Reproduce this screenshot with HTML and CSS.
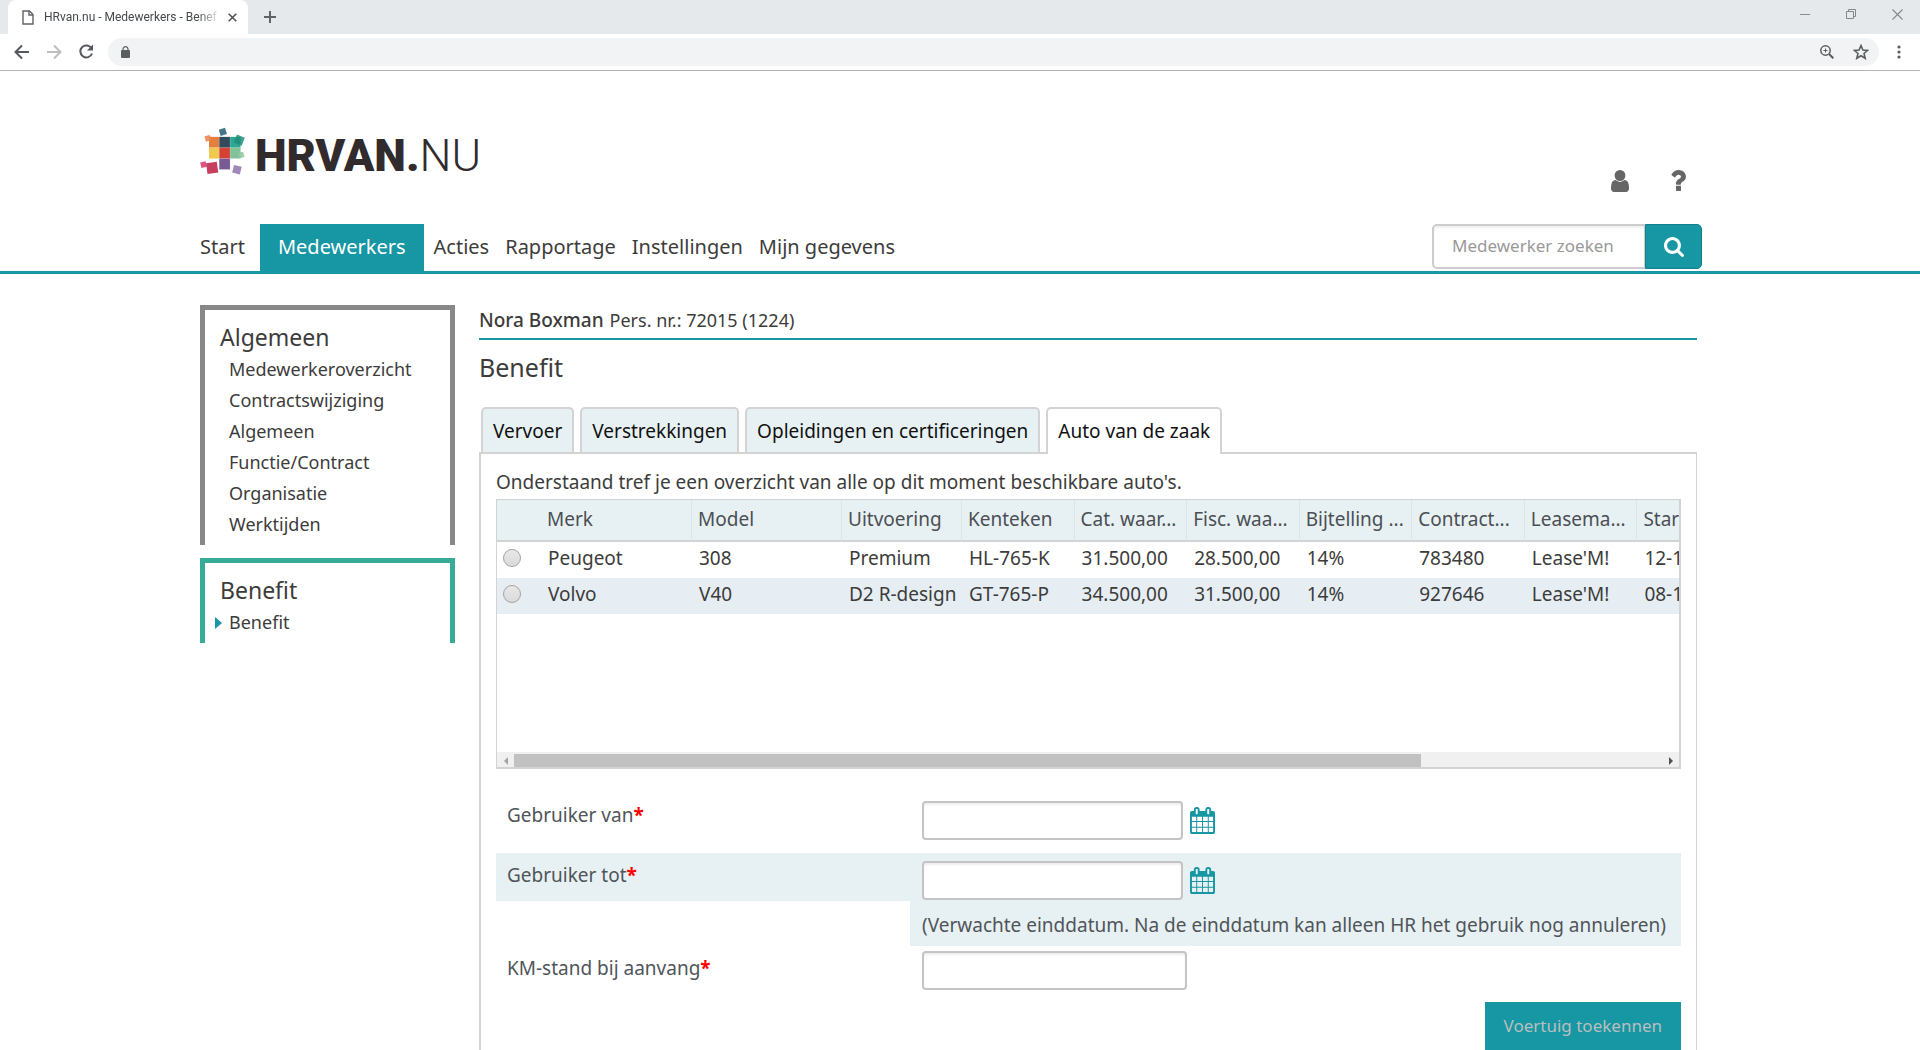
FILE: index.html
```html
<!DOCTYPE html>
<html lang="nl">
<head>
<meta charset="utf-8">
<meta name="viewport" content="width=device-width, initial-scale=1">
<title>HRvan.nu - Medewerkers - Benefit</title>
<link rel="stylesheet" href="styles.css">
</head>
<body>
<svg class="sprite" aria-hidden="true">
  <symbol id="calendar" viewBox="0 0 1664 1792"><path d="M128 1664h288v-288h-288v288zm352 0h320v-288h-320v288zm-352-352h288v-320h-288v320zm352 0h320v-320h-320v320zm-352-384h288v-288h-288v288zm736 736h320v-288h-320v288zm-384-736h320v-288h-320v288zm768 736h288v-288h-288v288zm-384-352h320v-320h-320v320zm-352-864v-288q0-13-9.5-22.5t-22.5-9.5h-64q-13 0-22.5 9.5t-9.5 22.5v288q0 13 9.5 22.5t22.5 9.5h64q13 0 22.5-9.5t9.5-22.5zm736 864h288v-320h-288v320zm-384-384h320v-288h-320v288zm384 0h288v-288h-288v288zm32-480v-288q0-13-9.5-22.5t-22.5-9.5h-64q-13 0-22.5 9.5t-9.5 22.5v288q0 13 9.5 22.5t22.5 9.5h64q13 0 22.5-9.5t9.5-22.5zm384-64v1280q0 52-38 90t-90 38h-1408q-52 0-90-38t-38-90v-1280q0-52 38-90t90-38h128v-96q0-66 47-113t113-47h64q66 0 113 47t47 113v96h384v-96q0-66 47-113t113-47h64q66 0 113 47t47 113v96h128q52 0 90 38t38 90z"/></symbol>
</svg>

<div class="browser">
  <div class="tabstrip">
    <div class="browser-tab">
      <svg class="file-icon" width="12" height="15" viewBox="0 0 12 15" fill="none" stroke="#5f6368" stroke-width="1.4"><path d="M1 1h6.500l3.500 3.500V14H1z"/><path d="M7 1v4h4"/></svg>
      <span class="tab-title">HRvan.nu - Medewerkers - Benef</span>
      <button class="plain" aria-label="Tabblad sluiten"><svg width="9" height="9" viewBox="0 0 9 9" stroke="#4f5357" stroke-width="1.600"><path d="M.7.7l7.600 7.600M8.300.7L.7 8.300"/></svg></button>
    </div>
    <button class="plain" aria-label="Nieuw tabblad"><svg width="12" height="12" viewBox="0 0 12 12" stroke="#5f6368" stroke-width="2"><path d="M6 0v12M0 6h12"/></svg></button>
    <div class="window-buttons">
      <button class="plain" aria-label="Minimaliseren"><svg width="10" height="10" viewBox="0 0 10 10" stroke="#8a8d90"><path d="M0 5.500h10"/></svg></button>
      <button class="plain" aria-label="Vorig formaat"><svg width="10" height="10" viewBox="0 0 10 10" fill="none" stroke="#85888b"><path d="M.5 2.500h7v7h-7zM2.500 2.500v-2h7v7h-2"/></svg></button>
      <button class="plain" aria-label="Sluiten"><svg width="11" height="11" viewBox="0 0 11 11" stroke="#85888b" stroke-width="1.100"><path d="M.5.5l10 10M10.500.5l-10 10"/></svg></button>
    </div>
  </div>
  <div class="toolbar">
    <button class="plain" aria-label="Terug"><svg width="16" height="16" viewBox="0 0 16 16" fill="none" stroke="#55595e" stroke-width="2"><path d="M15 8H2M8 1.500L1.500 8 8 14.500"/></svg></button>
    <button class="plain" aria-label="Vooruit"><svg width="16" height="16" viewBox="0 0 16 16" fill="none" stroke="#bdbec0" stroke-width="2"><path d="M1 8h13M8 1.500L14.500 8 8 14.500"/></svg></button>
    <button class="plain" aria-label="Vernieuwen"><svg width="16" height="16" viewBox="0 0 16 16" fill="none" stroke="#55595e" stroke-width="2"><path d="M13.600 4.500A6 6 0 1 0 14 9.500"/><path d="M15 .5v6H9z" fill="#55595e" stroke="none"/></svg></button>
    <div class="omnibox">
      <svg width="10" height="13" viewBox="0 0 10 13"><rect x="0" y="4" width="9" height="8" rx="1" fill="#5a5d62"/><path d="M2 5V3.200a2.500 2.500 0 0 1 5 0V5" fill="none" stroke="#5a5d62" stroke-width="1.200"/></svg>
      <span class="spacer"></span>
      <svg width="14" height="14" viewBox="0 0 14 14" fill="none" stroke="#5a5d62" stroke-width="1.500"><circle cx="5.500" cy="5.500" r="4.700"/><path d="M9 9l4.300 4.300" stroke-width="2"/><path d="M5.500 3.500v4M3.500 5.500h4" stroke-width="1"/></svg>
      <svg width="16" height="16" viewBox="0 0 16 16" fill="none" stroke="#5a5d62" stroke-width="1.600"><path d="M8 1.500l1.900 4.500 4.800.4-3.700 3.100 1.200 4.700L8 11.700l-4.200 2.500L5 9.500 1.300 6.400l4.800-.4z"/></svg>
    </div>
    <button class="plain menu" aria-label="Menu"><svg width="4" height="14" viewBox="0 0 4 14" fill="#5a5d62"><circle cx="2" cy="2" r="1.600"/><circle cx="2" cy="7" r="1.600"/><circle cx="2" cy="12" r="1.600"/></svg></button>
  </div>
</div>

<header class="site-header">
  <div class="brand-row">
    <a class="logo" href="#">
      <svg width="45" height="48" viewBox="30 36 136 146">
        <rect x="57" y="66" width="31" height="33" fill="#e57f3c"/>
        <rect x="88" y="66" width="33" height="33" fill="#33495c"/>
        <rect x="121" y="66" width="32" height="33" fill="#2fa594"/>
        <rect x="57" y="99" width="31" height="33" fill="#efca4f"/>
        <rect x="88" y="99" width="33" height="33" fill="#d54233"/>
        <rect x="121" y="99" width="32" height="33" fill="#83c199"/>
        <rect x="88" y="132" width="33" height="33" fill="#785a95"/>
        <path d="M121 66v99M88 66v99M57 99h96M88 132h65" stroke="#fff" stroke-opacity=".3" stroke-width="1.500"/>
        <rect x="89" y="41" width="20" height="20" fill="#47758a" transform="rotate(-17 99 51)"/>
        <rect x="45" y="62" width="17" height="17" fill="#ec8850" opacity=".9" transform="rotate(-14 53 70)"/>
        <rect x="136" y="63" width="26" height="26" fill="#1f8f79" opacity=".85" transform="rotate(22 149 76)"/>
        <rect x="146" y="113" width="17" height="17" fill="#92c9a5" opacity=".9" transform="rotate(-14 154 121)"/>
        <rect x="32" y="142" width="17" height="17" fill="#dc5580" transform="rotate(-14 40 151)"/>
        <rect x="50" y="144" width="33" height="33" fill="#c8405f" transform="rotate(-8 66 160)"/>
        <rect x="130" y="154" width="24" height="24" fill="#a087b7" transform="rotate(14 142 166)"/>
      </svg>
      <span class="logo-text"><b>HRVAN.</b>NU</span>
    </a>
    <div class="header-icons">
      <a href="#" aria-label="Profiel"><svg width="18" height="22" viewBox="256 128 1280 1536" preserveAspectRatio="none"><path d="M1536 1399q0 109-62.500 187t-150.500 78h-854q-88 0-150.500-78t-62.500-187q0-85 8.500-160.500t31.500-152 58.500-131 94-89 134.500-34.500q131 128 313 128t313-128q76 0 134.500 34.500t94 89 58.500 131 31.500 152 8.500 160.500zm-256-887q0 159-112.500 271.500t-271.500 112.500-271.500-112.500-112.500-271.500 112.500-271.500 271.500-112.500 271.500 112.500 112.500 271.500z"/></svg></a>
      <a href="#" aria-label="Help"><svg width="16" height="21" viewBox="384 256 1024 1280" preserveAspectRatio="none"><path d="M1088 1256v240q0 16-12 28t-28 12h-240q-16 0-28-12t-12-28v-240q0-16 12-28t28-12h240q16 0 28 12t12 28zm316-600q0 54-15.500 101t-35 76.500-55 59.500-57.500 43.500-61 35.500q-41 23-68.500 65t-27.500 67q0 17-12 32.500t-28 15.500h-240q-15 0-25.500-18.500t-10.500-37.500v-45q0-83 65-156.500t143-108.500q59-27 84-56t25-76q0-42-46.500-74t-107.500-32q-65 0-108 29-35 25-107 115-13 16-31 16-12 0-25-8l-164-125q-13-10-15.500-25t5.500-28q160-266 464-266 80 0 161 31t146 83 106 127.500 41 158.500z"/></svg></a>
    </div>
  </div>
  <div class="nav-row">
    <nav class="main-nav">
      <a href="#">Start</a>
      <a href="#" class="active">Medewerkers</a>
      <a href="#">Acties</a>
      <a href="#">Rapportage</a>
      <a href="#">Instellingen</a>
      <a href="#">Mijn gegevens</a>
    </nav>
    <form class="search">
      <input type="text" placeholder="Medewerker zoeken" aria-label="Medewerker zoeken">
      <button type="button" aria-label="Zoeken"><svg width="20" height="20" viewBox="64 128 1664 1664" fill="#fff"><path d="M1216 832q0-185-131.500-316.500t-316.500-131.500-316.500 131.500-131.500 316.500 131.500 316.500 316.500 131.500 316.500-131.500 131.500-316.500zm512 832q0 52-38 90t-90 38q-54 0-90-38l-343-342q-179 124-399 124-143 0-273.500-55.500t-225-150-150-225-55.500-273.500 55.500-273.500 150-225 225-150 273.500-55.500 273.500 55.500 225 150 150 225 55.500 273.500q0 220-124 399l343 343q37 37 37 90z"/></svg></button>
    </form>
  </div>
</header>

<div class="layout">
  <aside class="sidebar">
    <section class="side-box">
      <h2>Algemeen</h2>
      <ul>
        <li><a href="#">Medewerkeroverzicht</a></li>
        <li><a href="#">Contractswijziging</a></li>
        <li><a href="#">Algemeen</a></li>
        <li><a href="#">Functie/Contract</a></li>
        <li><a href="#">Organisatie</a></li>
        <li><a href="#">Werktijden</a></li>
      </ul>
    </section>
    <section class="side-box green">
      <h2>Benefit</h2>
      <ul>
        <li class="current"><a href="#">Benefit</a></li>
      </ul>
    </section>
  </aside>

  <main class="content">
    <p class="person"><strong>Nora Boxman</strong><span>Pers. nr.: 72015 (1224)</span></p>
    <h1>Benefit</h1>
    <div class="tabs" role="tablist">
      <button role="tab">Vervoer</button>
      <button role="tab">Verstrekkingen</button>
      <button role="tab">Opleidingen en certificeringen</button>
      <button role="tab" class="selected" aria-selected="true">Auto van de zaak</button>
    </div>
    <div class="panel">
      <p class="intro">Onderstaand tref je een overzicht van alle op dit moment beschikbare auto's.</p>
      <div class="grid-box">
        <div class="grid-view">
          <table>
            <colgroup><col class="pick"><col class="brand"><col class="model"><col class="trim"><col span="7"></colgroup>
            <thead>
              <tr><th class="open"></th><th>Merk</th><th>Model</th><th>Uitvoering</th><th>Kenteken</th><th>Cat. waar...</th><th>Fisc. waa...</th><th>Bijtelling ...</th><th>Contract...</th><th>Leasema...</th><th>Startdatum</th></tr>
            </thead>
            <tbody>
              <tr><td><input type="radio" name="auto" aria-label="Peugeot 308"></td><td>Peugeot</td><td>308</td><td>Premium</td><td>HL-765-K</td><td>31.500,00</td><td>28.500,00</td><td>14%</td><td>783480</td><td>Lease'M!</td><td>12-12-2018</td></tr>
              <tr><td><input type="radio" name="auto" aria-label="Volvo V40"></td><td>Volvo</td><td>V40</td><td>D2 R-design</td><td>GT-765-P</td><td>34.500,00</td><td>31.500,00</td><td>14%</td><td>927646</td><td>Lease'M!</td><td>08-11-2018</td></tr>
            </tbody>
          </table>
        </div>
        <div class="scrollbar">
          <svg class="arrow" width="17" height="10" viewBox="0 0 17 10" fill="#a3a3a3"><path d="M11 1v8L7 5z"/></svg>
          <div class="track"><div class="thumb"></div></div>
          <svg class="arrow" width="17" height="10" viewBox="0 0 17 10" fill="#505050"><path d="M7 1v8l4-4z"/></svg>
        </div>
      </div>

      <form class="fields">
        <div class="row">
          <label for="van">Gebruiker van<em>*</em></label>
          <div class="field"><div class="date"><input type="text" id="van"><button type="button" class="plain" aria-label="Kies datum"><svg class="cal" width="25" height="27"><use href="#calendar"/></svg></button></div></div>
        </div>
        <div class="row tinted">
          <label for="tot">Gebruiker tot<em>*</em></label>
          <div class="field"><div class="date"><input type="text" id="tot"><button type="button" class="plain" aria-label="Kies datum"><svg class="cal" width="25" height="27"><use href="#calendar"/></svg></button></div><p>(Verwachte einddatum. Na de einddatum kan alleen HR het gebruik nog annuleren)</p></div>
        </div>
        <div class="row compact">
          <label for="km">KM-stand bij aanvang<em>*</em></label>
          <div class="field"><input type="text" id="km" class="wide"></div>
        </div>
        <div class="actions"><button type="button" class="submit" disabled>Voertuig toekennen</button></div>
      </form>
    </div>
  </main>
</div>
</body>
</html>
```
FILE: styles.css
```css
* { box-sizing: border-box; }

:root {
  --teal: #1796a3;
  --pale: #e7f1f3;
  --line: #d3d3d3;
  --text: #3c3c3b;
}

body {
  margin: 0;
  min-height: 100vh;
  display: flex;
  flex-direction: column;
  background: #fff;
  color: var(--text);
  font: 19px/26px "Noto Sans", "Open Sans", sans-serif;
}

h1, h2, p, ul { margin: 0; padding: 0; font-weight: 400; }
ul { list-style: none; }
a { color: inherit; text-decoration: none; }
svg { display: block; flex: none; }
input, button { font: inherit; color: inherit; }
.sprite { display: none; }
.plain { display: flex; border: 0; padding: 0; background: none; }
.spacer { flex: 1; }

/* browser window */
.tabstrip {
  display: flex;
  align-items: center;
  height: 34px;
  padding: 0 17px 0 8px;
  background: #e5e9ec;
}
.browser-tab {
  display: flex;
  align-items: center;
  align-self: stretch;
  width: 240px;
  margin-right: 16px;
  padding: 0 11px 0 14px;
  border-radius: 8px 8px 0 0;
  background: #fff;
}
.file-icon { margin-right: 10px; }
.tab-title {
  flex: 1;
  margin-right: 9px;
  overflow: hidden;
  white-space: nowrap;
  font: 12px/16px Roboto, sans-serif;
  color: #45494d;
  -webkit-mask-image: linear-gradient(90deg, #000 155px, transparent 176px);
  mask-image: linear-gradient(90deg, #000 155px, transparent 176px);
}
.window-buttons {
  display: flex;
  align-items: center;
  gap: 36px;
  height: 28px;
  margin-left: auto;
  align-self: flex-start;
}
.toolbar {
  display: flex;
  align-items: center;
  gap: 16px;
  height: 37px;
  padding: 0 19px 0 14px;
  border-bottom: 1px solid #b4b4b4;
}
.omnibox {
  flex: 1;
  display: flex;
  align-items: center;
  gap: 19px;
  height: 28px;
  padding: 0 10px 0 13px;
  margin-left: -2px;
  border-radius: 14px;
  background: #f1f3f4;
}
.toolbar .menu { margin-left: 2px; }

/* site header */
.site-header {
  padding: 53px 218px 0 200px;
  border-bottom: 3px solid var(--teal);
}
.brand-row {
  display: flex;
  justify-content: space-between;
  height: 100px;
}
.logo { display: flex; align-items: flex-start; gap: 10px; padding-top: 3px; color: #322b2d; }
.logo-text { font: 300 45px/58px Roboto, sans-serif; }
.logo-text b { font-weight: 900; }
.header-icons {
  display: flex;
  gap: 41px;
  padding: 46px 16px 0 0;
  fill: #666;
}
.nav-row { display: flex; justify-content: space-between; }
.main-nav {
  display: flex;
  gap: 16px;
  font-size: 20px;
  line-height: 46px;
}
.main-nav a { height: 47px; }
.main-nav .active {
  margin: 0 -6px 0 -1px;
  padding: 0 18px;
  background: var(--teal);
  color: #fff;
}
.search { display: flex; height: 45px; }
.search input {
  width: 213px;
  padding: 0 18px 2px;
  border: 2px solid #ccc;
  border-right-width: 1px;
  border-radius: 5px 0 0 5px;
  box-shadow: inset 0 2px 2px #0001;
  font-size: 17px;
}
.search input::placeholder { color: #999; }
.search button {
  display: flex;
  align-items: center;
  justify-content: center;
  width: 57px;
  border: 1px solid #12808b;
  border-radius: 0 5px 5px 0;
  background: var(--teal);
}

/* page body */
.layout {
  flex: 1;
  display: grid;
  grid-template-columns: 255px 1fr;
  column-gap: 24px;
  padding: 31px 223px 0 200px;
}
.sidebar { display: flex; flex-direction: column; gap: 13px; }
.side-box {
  padding: 12px 15px 5px;
  border: 5px solid #888;
  border-bottom: 0;
}
.side-box.green { border-color: #36ab97; }
.side-box h2 { font-size: 23px; line-height: 30px; }
.side-box ul { padding: 2px 0 0 9px; font-size: 18px; line-height: 31px; }
.current { display: flex; align-items: center; }
.current::before {
  content: "";
  margin: 0 7px 0 -14px;
  border: 6px solid transparent;
  border-left: 7px solid var(--teal);
  border-right: 0;
}

.content { display: flex; flex-direction: column; min-width: 0; padding-top: 2px; }
.person {
  display: flex;
  gap: 6px;
  padding-bottom: 5px;
  border-bottom: 2px solid var(--teal);
}
.person strong { font-weight: 500; }
.person span { font-size: 18px; }
h1 { margin: 10px 0 23px; font-size: 25px; line-height: 34px; }

.tabs { display: flex; gap: 6px; padding-left: 2px; }
.tabs button {
  height: 45px;
  padding: 0 10px;
  border: 2px solid var(--line);
  border-bottom: 0;
  border-radius: 5px 5px 0 0;
  background: var(--pale);
  color: #111;
}
.tabs .selected {
  height: 47px;
  margin-bottom: -2px;
  padding-bottom: 2px;
  background: #fff;
  z-index: 1;
}
.panel {
  flex: 1;
  padding: 15px 15px 0;
  border: 1px solid var(--line);
  border-top-width: 2px;
  border-left-width: 2px;
  border-bottom: 0;
}
.intro { margin-bottom: 4px; }

/* car table */
.grid-box {
  border: 1px solid var(--line);
  border-width: 1px 2px 2px 1px;
}
.grid-view { height: 252px; overflow: hidden; }
table {
  width: 1253px;
  table-layout: fixed;
  border-collapse: separate;
  border-spacing: 0;
}
.pick { width: 44px; }
.brand { width: 151px; }
.model { width: 150px; }
.trim { width: 120px; }
th, td { padding: 0; text-align: left; font-weight: 400; white-space: nowrap; line-height: 32px; }
th {
  height: 42px;
  padding: 0 0 3px 6px;
  border-right: 1px solid #dbe4e7;
  border-bottom: 2px solid var(--line);
  background: var(--pale);
  color: #4b4f54;
}
th.open { border-right: 0; }
td { height: 36px; padding: 0 0 4px 7px; }
td:first-child { padding-left: 6px; }
tbody tr:nth-child(even) { background: #e6eef4; }
input[type="radio"] {
  display: block;
  appearance: none;
  width: 18px;
  height: 18px;
  margin: 0;
  border: 1px solid #a3a3a3;
  border-radius: 50%;
  background: linear-gradient(#e8e8e8, #dadada);
}
.scrollbar { display: flex; align-items: center; height: 15px; padding-top: 2px; background: #f0f0f0; }
.track { flex: 1; }
.thumb { width: 79%; height: 13px; background: #c1c1c1; }

/* form */
.fields { padding-top: 24px; color: #50555a; }
.row { display: grid; grid-template-columns: 414px 1fr; align-items: start; min-height: 60px; }
.row label { padding: 9px 11px 13px; }
.row em { color: #f00; font-style: normal; font-weight: 700; }
.field { padding: 8px 12px; }
.date { display: flex; align-items: center; gap: 7px; }
.cal { fill: var(--teal); }
.field input {
  display: block;
  width: 261px;
  height: 39px;
  border: 2px solid #c4c4c4;
  border-radius: 4px;
  background: #fff;
  box-shadow: inset 0 2px 2px #0001;
}
.field .wide { width: 265px; }
.field p { padding-top: 12px; white-space: nowrap; }
.tinted label, .tinted .field { background: var(--pale); }
.compact { min-height: 0; }
.compact .field { padding-top: 5px; }
.actions { display: flex; justify-content: flex-end; padding-top: 4px; }
.submit {
  height: 48px;
  padding: 0 19px;
  border: 0;
  background: var(--teal);
  color: #b9bfc0;
  font-size: 17px;
}
```
